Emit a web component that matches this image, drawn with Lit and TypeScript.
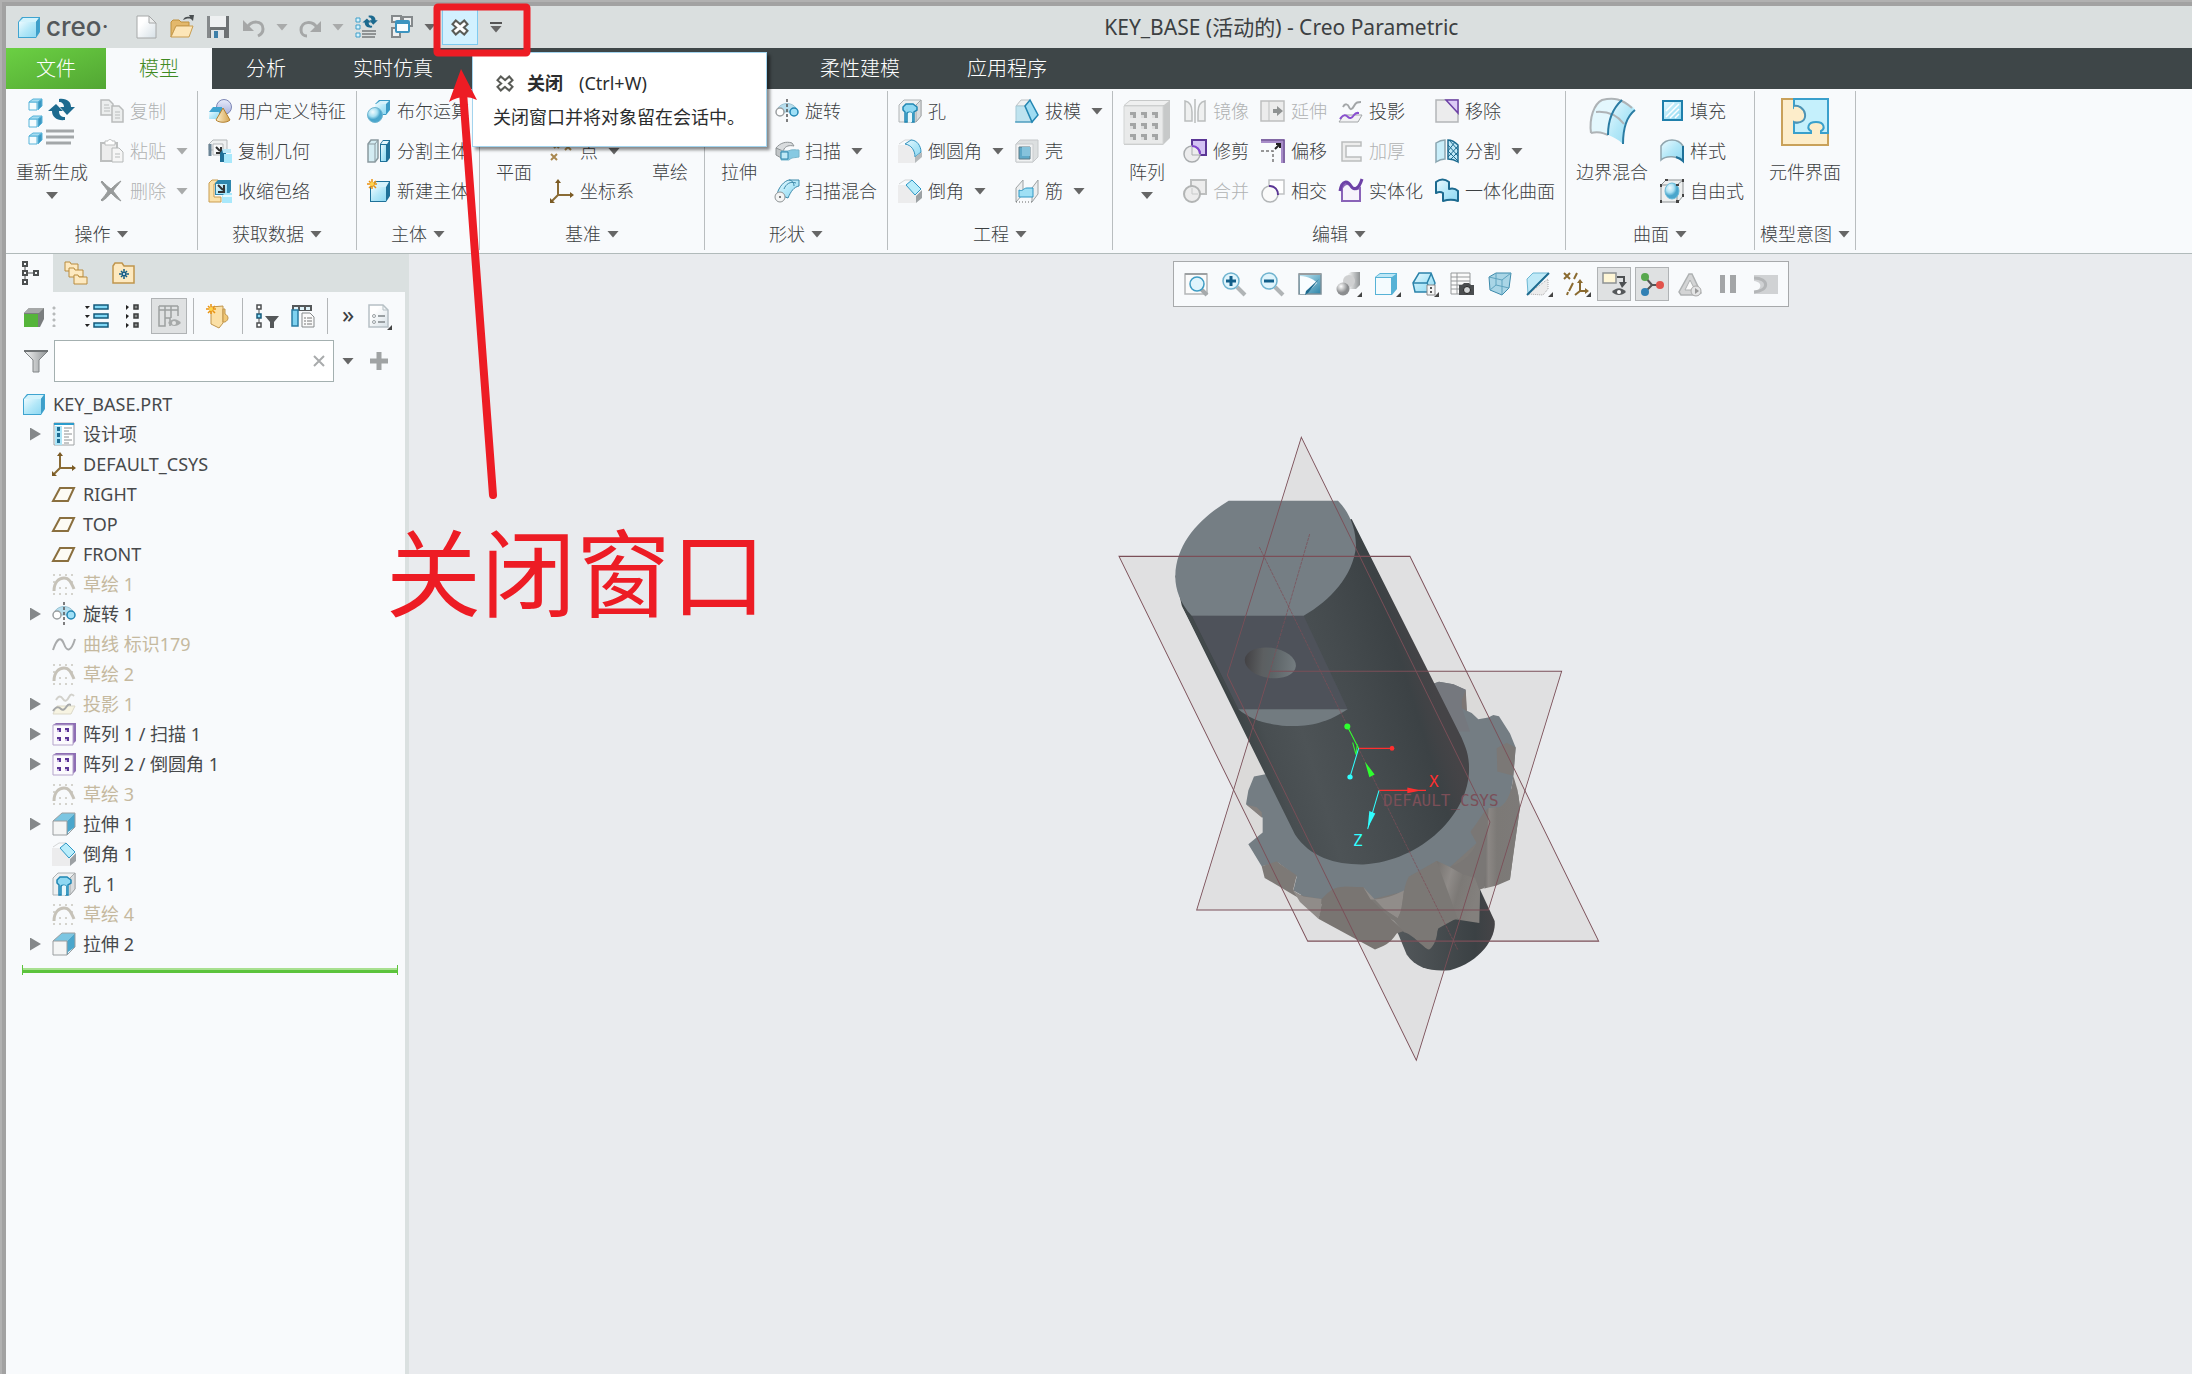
import { LitElement, html, svg, css, nothing, type SVGTemplateResult } from "lit";
import { customElement, state } from "lit/decorators.js";
import { classMap } from "lit/directives/class-map.js";

type Art = SVGTemplateResult;

interface Command {
  label: string;
  icon: string;
  menu?: boolean;
  disabled?: boolean;
}
interface BigCommand extends Command {
  big: true;
}
type Column = BigCommand | Command[];
interface Group {
  label: string;
  menu: boolean;
  columns: Column[];
}
interface TreeItem {
  label: string;
  icon: string;
  expandable?: boolean;
  hidden?: boolean;
}

const sketchArt = svg`
  <g fill="#c9c6be"><circle cx="2" cy="3" r="1"/><circle cx="8" cy="3" r="1"/><circle cx="14" cy="3" r="1"/><circle cx="20" cy="3" r="1"/>
  <circle cx="2" cy="10" r="1"/><circle cx="20" cy="10" r="1"/><circle cx="8" cy="16" r="1"/><circle cx="14" cy="16" r="1"/>
  <circle cx="2" cy="22" r="1"/><circle cx="8" cy="22" r="1"/><circle cx="14" cy="22" r="1"/><circle cx="20" cy="22" r="1"/></g>
  <path d="M2 19C2 10 7 6 12 6s7 4 10 11" fill="none" stroke="#c6c2b8" stroke-width="3"/>`;

const cycleArrows = svg`<path d="M31 1c8-1 12 3 12 8h4l-8 8-7-8h4c0-3-2-5-5-5z" fill="#1c6a8f"/><path d="M37 22c-8 1-13-3-13-9h-4l8-7 7 7h-4c0 4 2 6 6 6z" fill="#1c6a8f"/>`;

const ICONS: Record<string, Art> = {
  cube: svg`<path d="M1 7l4-5h18v15l-4 6H1z" fill="#3fa4d0"/><path d="M2 7l4-4h16l-3 4z" fill="#d3f3fc"/><path d="M19 7l3-4v14l-3 5z" fill="#3f9fc9"/><path d="M2 7h17v15H2z" fill="url(#ice)"/>`,
  newFile: svg`<path d="M3 1h12l7 7v15H3z" fill="url(#paper)" stroke="#a6a8a8"/><path d="M15 1v7h7z" fill="#eceeee" stroke="#a6a8a8"/>`,
  open: svg`<path d="M1 22V7l2-2h6l2 2h8v4H6z" fill="#e3b86b" stroke="#c0913f"/><path d="M1 22l5-11h17l-4 11z" fill="#fde6b8" stroke="#c99d50"/><path d="M13 5c1-3 4-4 7-3l-1-2 5 0-1 6-2-2c-3-1-5 0-8 1z" fill="#4a4f51"/>`,
  save: svg`<path d="M1 1h22v22H1z" fill="#6d7173"/><path d="M4 1h16v11H4z" fill="#eef0f1"/><path d="M5 15h13v8H5z" fill="#dfe3e5"/><path d="M8 16h4v7H8z" fill="#3d7fa8"/><path d="M1 1h3v22H1z" fill="#85898b"/>`,
  undo: svg`<path d="M1 5v11h11z" fill="#a5a7a7"/><path d="M5 13C9 5 21 5 21 14c0 4-3 6-5 7" fill="none" stroke="#a5a7a7" stroke-width="3"/>`,
  redo: svg`<path d="M23 6v11H12z" fill="#a5a7a7"/><path d="M19 13C15 5 3 6 3 15c0 4 3 6 6 6" fill="none" stroke="#a5a7a7" stroke-width="3"/>`,
  regenSmall: svg`<g fill="#d8f3fd" stroke="#3f9fc9"><path d="M2 3h4v4H2z"/><path d="M2 10h4v4H2z"/><path d="M2 18h4v4H2z"/></g><g stroke="#8f9394" stroke-width="2"><path d="M8 16h14M8 19h14M8 22h13"/></g><g transform="translate(-3 0) scale(.57)">${cycleArrows}</g>`,
  windows: svg`<g fill="#eef0f0" stroke="#84898b" stroke-width="2"><path d="M2 1h9v6H2zM13 2h9v9h-9zM2 13h8v9H2z"/></g><rect x="6" y="6" width="13" height="11" rx="1" fill="#f8fdff" stroke="#3b94c0" stroke-width="2"/><path d="M7 8h11" stroke="#3b94c0" stroke-width="2"/>`,
  closeX: svg`<path d="M8 9l8 7M16 9l-8 7" stroke="#5a5c57" stroke-width="7" stroke-linecap="square"/><path d="M8 9l8 7M16 9l-8 7" stroke="#fff" stroke-width="3" stroke-linecap="square"/>`,
  regenerate: svg`<g stroke="#58b4da"><g fill="#f5fcfe"><path d="M1 4h8v8H1zM1 21h8v8H1zM1 38h8v8H1z"/></g><g fill="#a6dcf0"><path d="M1 4l4-3h9l-4 3zM1 21l4-3h9l-4 3zM1 38l4-3h9l-4 3z"/></g><g fill="#3c98c2"><path d="M10 4l4-3v7l-4 4zM10 21l4-3v7l-4 4zM10 38l4-3v7l-4 4z"/></g></g><g stroke="#a3a7a9" stroke-width="3"><path d="M18 33h28M18 39h28M18 45h25"/></g>${cycleArrows}`,
  copy: svg`<g fill="#eceeee" stroke="#b9bcbc" stroke-width="1.500"><path d="M1 1h8l4 4v11H1z"/><path d="M12 7h7l4 4v12H12z"/></g><path d="M4 6h5M4 9h6M4 12h6M15 13h5M15 16h5M15 19h5" stroke="#b9bcbc"/>`,
  paste: svg`<path d="M1 4h16v18H1z" fill="#ededed" stroke="#bdbfbf" stroke-width="2"/><path d="M5 2h3c0-2 4-2 4 0h3v4H5z" fill="#fff" stroke="#bdbfbf"/><path d="M12 9h7l4 4v10H12z" fill="#f6f6f6" stroke="#b5b8b8"/><path d="M15 15h5M15 18h5" stroke="#b9bcbc"/>`,
  del: svg`<path d="M2 2c3 3 6 6 9 8 3-3 6-6 10-8-3 4-6 7-8 10 3 3 5 7 8 10-4-2-7-5-10-8-3 3-5 6-9 8l-1-1c3-3 5-6 7-9-2-3-5-6-7-9z" fill="#989b9b" stroke="#989b9b"/>`,
  udf: svg`<circle cx="16" cy="8" r="7.500" fill="url(#lav)" stroke="#7d86b5"/><path d="M1 13l4-5h9v6l-3 6H1z" fill="#3fa4d0"/><path d="M1 13h10v7H1z" fill="url(#ice)"/><path d="M15 9l7 12c-3 3-11 3-14 0z" fill="url(#gold)" stroke="#b2802f"/>`,
  copyGeom: svg`<path d="M1 5l4-4h14v10H1z" fill="#eef0f1" stroke="#b3b7b9"/><path d="M2 5v12" stroke="#6b8496" stroke-width="3"/><path d="M5 5h10v11H5z" fill="#f8f9fa" stroke="#b3b7b9"/><path d="M8 8l4 4M13 8v6H8" stroke="#333" stroke-width="2" fill="none"/><path d="M12 14l3-4h3v13h-6z" fill="#1f7199"/><path d="M14 10h9v4h-8z" fill="#bde9f8"/><path d="M16 15h8v9h-8z" fill="#a9e8fb"/>`,
  shrinkwrap: svg`<path d="M1 4l3-3h6v4H6v13h7v5H1z" fill="#fbe2ab" stroke="#c99d50"/><path d="M7 4l3-3h13v11l-3 4H7z" fill="#2f87ae"/><path d="M8 5h11v10H8z" fill="url(#ice)"/><path d="M10 6l5 5M16 6v7h-6" stroke="#333" stroke-width="2" fill="none"/><path d="M14 17l3-3h7v10H14z" fill="#a9e8fb"/><path d="M15 17h9" stroke="#e6f9fe" stroke-width="2"/>`,
  boolean: svg`<path d="M8 5l4-4h11v10l-4 5H8z" fill="#3b9cc6"/><path d="M8 5h11v10H8z" fill="url(#ice)"/><path d="M9 5l4-3h9l-3 3z" fill="#d5f2fb"/><circle cx="8" cy="16" r="7.500" fill="url(#ball)" stroke="#70b6d1"/>`,
  splitBody: svg`<path d="M1 5l3-4h7v18l-3 4H1z" fill="#d3ecf3" stroke="#8a999f" stroke-width="1.500"/><path d="M1 5h7v18M8 5l3-4" fill="none" stroke="#8a999f"/><path d="M13 5l3-4h7v18l-3 4h-7z" fill="#1f7199"/><path d="M14 6h5v16h-5z" fill="url(#ice)"/><path d="M14 5l2-3h6l-2 3z" fill="#e3f7fd"/>`,
  newBody: svg`<path d="M3 8l5-6h15v15l-4 6H3z" fill="#1f7199"/><path d="M4 8h15v14H4z" fill="url(#ice)"/><path d="M5 8l4-5h13l-3 5z" fill="#d5f2fb"/><path d="M5 0v10M0 5h10M2 2l7 7M9 2L2 9" stroke="#e99312" stroke-width="1.500"/><circle cx="5" cy="5" r="2" fill="#ffd54c"/>`,
  plane48: svg`<path d="M10 12h32L34 40H2z" fill="#faf3e2" stroke="#8a6a30" stroke-width="3"/>`,
  sketch48: svg`<path d="M4 36C6 8 30 6 42 30" fill="none" stroke="#3a97c2" stroke-width="4"/>`,
  extrude48: svg`<path d="M4 18L20 4h24L28 18v26H4z" fill="url(#ice)" stroke="#8f9496" stroke-width="2"/>`,
  axis: svg`<path d="M3 21L21 3" stroke="#8a6a30" stroke-width="2" stroke-dasharray="6 2"/>`,
  point: svg`<g stroke="#a98850" stroke-width="2"><path d="M1 15l6 6M7 15l-6 6M15 5l6 6M21 5l-6 6M4 4l5 5M9 4L4 9"/></g>`,
  csys: svg`<g stroke="#8a6b35" stroke-width="2" fill="none"><path d="M8 2v14h14M8 16l-6 6"/></g><path d="M8 0l3 4H5zM24 16l-4-3v6zM0 24v-5l5 5z" fill="#7a5a24"/>`,
  revolve: svg`<path d="M3 9C7 3 17 3 21 9v4H3z" fill="#b7dfef" stroke="#9cc3d3"/><path d="M12 0v24" stroke="#555" stroke-width="1.500" stroke-dasharray="3 2"/><circle cx="5" cy="13" r="4" fill="#fff" stroke="#9b9fa1" stroke-width="1.500"/><circle cx="19" cy="13" r="4" fill="#9fe0f7" stroke="#2286b3" stroke-width="1.500"/>`,
  sweep: svg`<path d="M1 9C5 4 11 2 17 4l2 3c-5-1-8 0-10 3l-1 4z" fill="#d9dcde" stroke="#8f9496"/><path d="M1 9l7 3v8l-7-4z" fill="#c1c5c7" stroke="#8f9496"/><path d="M6 12h7c4-2 8-1 11-1v7c-4 1-7 0-10 3H6z" fill="#86c9e2" stroke="#79b5cb"/><path d="M6 13h7v7H6z" fill="#bfe9f6" stroke="#2b83aa"/>`,
  sweptBlend: svg`<path d="M2 15C4 8 9 2 14 1h10v6c-5 1-8 5-11 12z" fill="url(#ice)" stroke="#3d8aab"/><path d="M9 10c2-5 6-8 12-6M14 1c3 0 5 3 5 6" fill="none" stroke="#3d8aab"/><circle cx="5" cy="18" r="5" fill="#f3f4f4" stroke="#8e9395"/><circle cx="5" cy="18" r="1" fill="#555"/>`,
  hole: svg`<path d="M1 6l5-5h17v16l-5 6H1z" fill="#eef0f1" stroke="#b0b4b6"/><path d="M18 6l5-5v16l-5 6z" fill="#d9dcde" stroke="#a3a7a9"/><path d="M5 11V8l3-3h7l4 3v3l-3 2v10h-2v-9c-1-1-4-1-5 0v9H7V13z" fill="#8fd8f2" stroke="#1f86b3" stroke-width="1.500"/><path d="M10 14c1-1 3-1 4 0v9h-4z" fill="#e6f8fd"/>`,
  round: svg`<path d="M0 6h7c6 1 10 6 10 12v6H0z" fill="#ececed"/><path d="M1 5l6-4h7" fill="none" stroke="#d3d5d6"/><path d="M7 5l6-4c6 0 10 6 10 12l-6 5C17 11 13 6 7 5z" fill="url(#ice)" stroke="#3393bf"/><path d="M17 18l7-5v5l-7 6z" fill="#b5b9bb"/>`,
  chamfer: svg`<path d="M0 6h8l10 10v8H0z" fill="#ececed"/><path d="M1 5l6-4h7" fill="none" stroke="#d3d5d6"/><path d="M8 6l6-5 9 9-6 6z" fill="#b9edfb" stroke="#2f97c4"/><path d="M18 17l6-6v8l-6 5z" fill="#9ca1a4"/>`,
  draft: svg`<path d="M1 7l5-6h9l-4 6z" fill="#eef1f2" stroke="#bcc0c2"/><path d="M1 7h9l7 16H1z" fill="#bfe3ef" stroke="#a5c9d6"/><path d="M10 7l5-6 8 15-6 7z" fill="#9fdcf2" stroke="#2386b2" stroke-width="1.500"/><path d="M0 23h18" stroke="#2386b2"/>`,
  shell: svg`<path d="M1 5l4-4h18v17l-5 5H1z" fill="#dcdfe0" stroke="#c5c8ca"/><path d="M1 5h17v18H1z" fill="#f0f1f2" stroke="#c9ccce"/><path d="M4 8h11v12H4z" fill="#5fa9c8" stroke="#5f7c88"/><path d="M7 8h8v9H7z" fill="#86c3dc"/>`,
  rib: svg`<path d="M1 9l7-8v14l-7 8zM17 9l6-8v14l-6 8z" fill="#eceeef" stroke="#9da2a4"/><path d="M4 11c4 2 4-2 8-2h6v9H4z" fill="#9fe0f5" stroke="#2f97c4"/><path d="M1 23h16" stroke="#666" stroke-dasharray="1 2"/>`,
  pattern48: svg`<path d="M1 7l6-5h40v38l-7 7H1z" fill="#c7c9c9"/><path d="M2 7l5-4h39l-5 4z" fill="#eff0f0"/><path d="M1 8h39v38H1z" fill="#e9eaea" stroke="#d2d4d4"/><g fill="#a3a5a5"><path d="M7 14h6v6H7zM18 14h6v6h-6zM29 14h6v6h-6zM7 25h6v6H7zM18 25h6v6h-6zM29 25h6v6h-6zM7 36h6v6H7zM18 36h6v6h-6zM29 36h6v6h-6z"/></g><g fill="#dcdddd"><path d="M7 17h3v3H7zM18 17h3v3h-3zM29 17h3v3h-3zM7 28h3v3H7zM18 28h3v3h-3zM29 28h3v3h-3zM7 39h3v3H7zM18 39h3v3h-3zM29 39h3v3h-3z"/></g>`,
  mirror: svg`<g fill="#eff0f0" stroke="#babdbd" stroke-width="1.500"><path d="M2 2c5 1 7 5 7 11v9H2zM22 2c-5 1-7 5-7 11v9h7z"/><path d="M12 0v24"/></g>`,
  extend: svg`<path d="M0 2h23v20H0z" fill="#ececec" stroke="#bdbfbf" stroke-width="1.500"/><path d="M8 2v20" stroke="#bdbfbf"/><path d="M12 10h4V7l6 5-6 5v-3h-4z" fill="#8f9292"/>`,
  project: svg`<path d="M4 8c2-4 5-3 6 0s3 3 5-1 4-4 7-4" fill="none" stroke="#a3a6a8" stroke-width="2"/><path d="M5 16h18l-4 7H0z" fill="#f2f2f4" stroke="#a3a6a8"/><path d="M1 20c3-5 6-4 8-2s4 1 6-2 4-2 5-2" fill="none" stroke="#8a4fd0" stroke-width="2"/>`,
  removeFace: svg`<path d="M1 1h22v22H1z" fill="#ececed" stroke="#b3b5b8" stroke-width="1.500"/><path d="M11 1h12v13z" fill="#dccbf5" stroke="#6d41a6" stroke-width="1.500"/>`,
  trim: svg`<path d="M9 1h14v15h-6c0-5-3-8-8-8z" fill="#d3c2f3" stroke="#5b3596" stroke-width="2"/><circle cx="9" cy="15" r="8" fill="#ececed" stroke="#a9acae" stroke-width="1.500"/><path d="M9 7c5 0 8 4 8 8" fill="none" stroke="#8142cf" stroke-width="2"/><path d="M9 8v8h7" fill="none" stroke="#a9acae"/>`,
  offset: svg`<path d="M0 2h22v22" fill="none" stroke="#a88dc9" stroke-width="4"/><path d="M0 1h23v23" fill="none" stroke="#5d4280"/><path d="M0 12h12v12" fill="none" stroke="#777" stroke-dasharray="3 2" stroke-width="1.500"/><path d="M14 10l5-5M15 5h4v4" fill="none" stroke="#222" stroke-width="2"/>`,
  thicken: svg`<path d="M22 3H3v19h19v-4H7V7h15z" fill="#ededed" stroke="#babdbd" stroke-width="1.500"/>`,
  splitFace: svg`<path d="M1 4c3-2 6-3 9-3v19c-3 0-6 1-9 3z" fill="#c9eefa" stroke="#8aa5b0" stroke-width="1.500"/><path d="M13 1c4 0 7 2 10 5v17c-3-2-6-3-10-3z" fill="#bfe8f7" stroke="#1c6a8f" stroke-width="1.500"/><path d="M13 6l10 11M13 12l10 10M14 1l9 10M23 7L13 18M23 13l-8 8M20 3l-7 9" stroke="#1c6a8f"/>`,
  merge: svg`<path d="M8 1h15v14H8z" fill="#ededed" stroke="#bdbfbf" stroke-width="2"/><circle cx="9" cy="15" r="8" fill="#ececec" stroke="#b2b4b4" stroke-width="2"/><path d="M9 9v6h6" fill="none" stroke="#c8caca"/>`,
  intersect: svg`<path d="M8 1h15v14H8z" fill="#fff" stroke="#c0c2c4" stroke-width="1.500"/><circle cx="9" cy="15" r="8" fill="#fafafa" stroke="#b2b5b7" stroke-width="1.500"/><path d="M8 7c6 0 9 4 9 9" fill="none" stroke="#5b3596" stroke-width="2"/>`,
  solidify: svg`<path d="M3 9v13h18V9c-5 3-8 0-10-3-3-2-6-1-8 3z" fill="#f6f3fb" stroke="#8a63b8" stroke-width="2"/><path d="M1 12C3 0 9 2 12 7s8 3 11-7" fill="none" stroke="#6d41a6" stroke-width="3"/>`,
  unified: svg`<path d="M1 14V3c4-3 9-3 13 0v7c4-1 7 0 9 2v10c-5-2-9-2-15 0V14c-3-2-5-1-7 0z" fill="url(#ice)" stroke="#1c6a8f" stroke-width="2" stroke-linejoin="round"/>`,
  boundary48: svg`<path d="M3 35C1 20 6 6 14 2c12-3 22-1 33 8-9 9-12 22-12 36-8-8-18-13-32-11z" fill="#e3f7fd"/><path d="M20 37c5 2 10 4 15 9 0-14 3-27 12-34-3-4-8-7-13-10-10 9-14 22-14 35z" fill="url(#ice)"/><path d="M3 35C1 20 6 6 14 2c12-3 20-1 30 8" fill="none" stroke="#aeb3b6" stroke-width="2"/><path d="M8 14c12-1 21 3 28 12M3 35c7-2 12 0 17 2" fill="none" stroke="#aeb3b6" stroke-width="2"/><path d="M34 2C24 11 20 24 20 37M35 46c0-14 3-27 12-34" fill="none" stroke="#2a7ca3" stroke-width="2"/>`,
  fill: svg`<path d="M3 2h19v19H3z" fill="url(#ice)" stroke="#1f7fab" stroke-width="2"/><path d="M6 12l8-8M6 18L19 5M10 19l9-9M15 19l4-4" stroke="#fff" stroke-width="1.500"/>`,
  style: svg`<path d="M1 21V7C6-1 18-1 23 7v15c-5-5-17-6-22-1z" fill="url(#ice)" stroke="#8fa5ae" stroke-width="1.500"/><path d="M23 7v15c-2-2-4-3-7-4" fill="none" stroke="#1f7199" stroke-width="2"/>`,
  freestyle: svg`<path d="M1 6l5-5h17v16l-5 6H1z" fill="#eef0f0" stroke="#8e9294"/><path d="M1 6h16v17M17 6l6-5" fill="none" stroke="#8e9294"/><ellipse cx="12" cy="12" rx="7" ry="8" fill="url(#ball)" stroke="#6bbbd9"/><path d="M0 5h2v3H0zM16 5h3v2h-3zM22 0h2v3h-2zM5 0h3v2H5zM0 21h2v3H0zM16 21h3v3h-3zM22 15h2v3h-2z" fill="#444"/>`,
  component48: svg`<path d="M1 1h46v46H1z" fill="#fdedca" stroke="#c9a15a" stroke-width="2"/><path d="M13 1h34v34h-7v-2c4-2 4-9-5-9s-9 7-5 9v2H13V24c2 1 4 1 6-1 5-4 4-12-1-14-2-1-4-1-5 0z" fill="#c5f0fc" stroke="#3aa0cc" stroke-width="2"/><path d="M13 8c4-1 10 2 11 8s-4 10-11 8" fill="#fdedca" stroke="#4d93b5" stroke-width="2"/>`,
  treeTab: svg`<g fill="none" stroke="#4c4f50" stroke-width="2"><path d="M5 1h4v4H5zM5 10h4v4H5zM16 10h4v4h-4zM5 19h4v4H5z"/></g><path d="M7 6v3M7 15v3M10 12h5" stroke="#4c4f50"/>`,
  folders: svg`<g fill="#fde9c0" stroke="#b98c3f"><path d="M0 1h5l1 2h7v7H0z"/><path d="M4 7h5l1 2h8v7H4z"/><path d="M9 14h4l1 2h8v7H9z"/></g>`,
  favorites: svg`<path d="M1 5l2-3h7l2 3h10v17H1z" fill="#fde9c0" stroke="#c0954c" stroke-width="1.500"/><path d="M12 8v10M7 13h10M9 10l6 6M15 10l-6 6" stroke="#175d85" stroke-width="1.500"/><circle cx="12" cy="13" r="1" fill="#fff"/>`,
  greenCube: svg`<path d="M2 9l5-5h15v11l-4 8H2z" fill="#7a7d7e"/><path d="M2 10h14v13H2z" fill="#55b43a"/><path d="M2 9l5-5h15l-5 5z" fill="#a6a8a8"/>`,
  expandAll: svg`<path d="M0 2h5L2 5zM0 11h5l-3 3zM0 20h5l-3 3z" fill="#222"/><g fill="#7fd7f5" stroke="#14597a" stroke-width="1.500"><path d="M9 1h14v4H9zM9 10h14v4H9zM9 19h14v4H9z"/></g>`,
  collapseAll: svg`<path d="M5 1v5l3-3zM5 10v5l3-3zM5 19v5l3-3z" fill="#222"/><g fill="#888b8b" stroke="#3a3c3c" stroke-width="1.500"><path d="M13 1h4v4h-4zM13 10h4v4h-4zM13 19h4v4h-4z"/></g>`,
  columns: svg`<path d="M2 2h19M2 6h19M2 2v20h6V2M8 14h5v8M14 2v12M21 2v10" fill="none" stroke="#9da0a0" stroke-width="1.500"/><path d="M11 19c4-5 9-5 13 0-4 4-9 4-13 0z" fill="#a6a9a9"/><circle cx="17" cy="19" r="2" fill="#e3e4e4"/>`,
  addFolder: svg`<path d="M5 3l12-1v17l-4 5-8-4z" fill="#fbe0a6" stroke="#c0954c"/><path d="M17 5h2v5c4 2 4 6 0 8h-2z" fill="#f0c878" stroke="#c0954c"/><path d="M5 0v10M0 5h10M2 2l7 7M9 2L2 9" stroke="#e99312" stroke-width="1.500"/><circle cx="5" cy="5" r="2" fill="#ffd54c"/>`,
  treeFilter: svg`<g fill="#fff" stroke="#4c4f50" stroke-width="1.500"><path d="M2 1h4v4H2zM2 19h4v4H2z"/></g><path d="M2 10h4v4H2z" fill="#8edbf6" stroke="#14597a" stroke-width="1.500"/><path d="M4 5v5M4 14v5" stroke="#4c4f50"/><path d="M10 12h14l-5 6v6h-4v-6z" fill="#55585a"/>`,
  treePrefs: svg`<path d="M1 1h20v6H1z" fill="#55585a"/><path d="M3 3h4v3H3zM9 3h4v3H9zM15 3h4v3h-4z" fill="#dff3fa"/><path d="M1 6h6v16H1z" fill="#7fd2f0" stroke="#2a7ca3" stroke-width="1.500"/><path d="M11 9h8l4 4v10H11z" fill="#fafafa" stroke="#85898b"/><path d="M13 14h2M16 14h5M13 17h2M16 17h5M13 20h2M16 20h5" stroke="#777"/>`,
  pagePrefs: svg`<path d="M1 1h14l5 5v17H1z" fill="url(#paper)" stroke="#b6c0c5" stroke-width="1.500"/><path d="M15 1v5h5" fill="none" stroke="#b6c0c5"/><g fill="none" stroke="#9aa0a3"><circle cx="6" cy="12" r="1.500"/><circle cx="6" cy="18" r="1.500"/><path d="M10 12h7M10 18h7" stroke-width="2"/></g><path d="M24 21v5h-5z" fill="#444"/>`,
  funnel: svg`<path d="M0 2h24l-9 9v12H9V11z" fill="url(#steel)" stroke="#808486"/><path d="M0 2h24" stroke="#6f7375" stroke-width="2"/>`,
  designItems: svg`<path d="M2 1h20v22H2z" fill="#fff" stroke="#9ea2a4"/><path d="M2 2h20" stroke="#2a9ccc" stroke-width="2"/><path d="M3 4h7v19H3z" fill="#aee6f8"/><g fill="#1d6d93"><path d="M5 5h3v4H5zM5 11h3v4H5zM5 17h3v4H5z"/></g><path d="M12 6h8M12 9h5M12 12h8M12 15h5M12 18h8M12 21h5" stroke="#8c9092"/>`,
  datum: svg`<path d="M8 6h14l-6 13H1z" fill="#fdfbf4" stroke="#8a6f3f" stroke-width="2"/>`,
  sketch: sketchArt,
  curve: svg`<path d="M1 18C5 6 9 4 12 12s7 8 11-5" fill="none" stroke="#a9abac" stroke-width="2"/>`,
  projectHidden: svg`<path d="M4 8c3-5 5-4 7-1s4 2 6-2 4-2 5-1" fill="none" stroke="#d2d1cb" stroke-width="2"/><path d="M5 14h18l-4 8H1z" fill="#f7f4e2" stroke="#dcd9c8"/><path d="M1 19c3-5 6-4 8-2s4 0 6-3 3-1 4-1" fill="none" stroke="#a5a7a8" stroke-width="2"/>`,
  pattern: svg`<path d="M1 3l3-2h20v18l-4 4H1z" fill="#8e6fb4"/><path d="M1 3h20v20H1z" fill="#fbfafd" stroke="#b5a5cb"/><g fill="#5b3596"><path d="M5 6h4v4H5zM13 6h4v4h-4zM5 15h4v4H5zM13 15h4v4h-4z"/></g><g fill="#cbb9e4"><path d="M5 8h2v2H5zM13 8h2v2h-2zM5 17h2v2H5zM13 17h2v2h-2z"/></g>`,
  extrude: svg`<path d="M1 9l9-8h13l-8 8z" fill="#7cc6e2"/><path d="M15 9l8-8v14l-8 8z" fill="#4aa6cc"/><path d="M16 20l7-5-7 8z" fill="#e8f6fb"/><path d="M1 9h14v14H1z" fill="#f4f5f5"/><path d="M1 9l9-8h13v14l-8 8H1zM1 9h14v14" fill="none" stroke="#9a9ea0"/>`,
  zoomFit: svg`<path d="M1 2h22v20H1z" fill="#fbfbfb" stroke="#b4b7b8" stroke-width="1.500"/><path d="M1 2h22" stroke="#9da1a3" stroke-width="2"/><path d="M16 16l7 7" stroke="#a6aaac" stroke-width="4"/><circle cx="13" cy="12" r="7" fill="#dff4fc" stroke="#3e9cc4" stroke-width="1.500"/>`,
  zoomIn: svg`<path d="M15 15l8 8" stroke="#b0b4b6" stroke-width="4"/><circle cx="9" cy="9" r="8" fill="#dff4fc" stroke="#6fb3cf" stroke-width="1.500"/><path d="M4 9h10M9 4v10" stroke="#125f8a" stroke-width="3"/>`,
  zoomOut: svg`<path d="M15 15l8 8" stroke="#b0b4b6" stroke-width="4"/><circle cx="9" cy="9" r="8" fill="#dff4fc" stroke="#6fb3cf" stroke-width="1.500"/><path d="M4 9h10" stroke="#125f8a" stroke-width="3"/>`,
  repaint: svg`<path d="M1 2h22v20H1z" fill="url(#teal)" stroke="#7e9099" stroke-width="1.500"/><path d="M2 4c8 0 15 4 17 7L8 22H2z" fill="#f9fdff"/><path d="M21 7L10 21l-3 2 1-4z" fill="#1c6a8f"/><path d="M1 2h22" stroke="#999da0" stroke-width="2"/>`,
  shading: svg`<path d="M12 2l3-2h9v13l-4 4h-8z" fill="url(#steel)"/><circle cx="13" cy="9" r="6" fill="#cfd0d1"/><circle cx="7" cy="17" r="6.500" fill="url(#grayBall)"/><path d="M26 20v5h-5z" fill="#444"/>`,
  savedView: svg`<path d="M1 5l5-4h17v16l-5 6H1z" fill="#56b2d6"/><path d="M2 6h15v16H2z" fill="#f4fbfe"/><path d="M2 5l4-3h16l-4 3z" fill="#bde7f6"/><path d="M27 20v5h-5z" fill="#444"/>`,
  viewManager: svg`<path d="M7 1h12l4 10-3 9H3l-2-9z" fill="url(#ice)" stroke="#2b83aa" stroke-width="1.500"/><path d="M1 11h14l4-9M15 11l4 8" fill="none" stroke="#2b83aa" stroke-width="1.500"/><path d="M15 13h8v10h-8z" fill="#f5f5f5" stroke="#888"/><path d="M18 16h2M18 20h2" stroke="#555" stroke-width="2"/><path d="M27 20v5h-5z" fill="#444"/>`,
  appearance: svg`<path d="M1 1h19v21H1z" fill="#fafafa" stroke="#96999b"/><path d="M1 5h19M1 9h19M1 13h19M1 17h19M7 1v21" stroke="#96999b"/><path d="M9 13h3l2-2h5l2 2h3v10H9z" fill="#4a4d4f"/><circle cx="17" cy="18" r="3.500" fill="#d2d5d6" stroke="#222"/>`,
  perspective: svg`<path d="M1 5l7-4h15l-2 15-7 7-12-5z" fill="#a9d5e6" stroke="#3d8aab"/><path d="M1 5l13 3 9-7M14 8v15M8 1v12l13 3M8 13l-6 5" fill="none" stroke="#5fa3bf"/>`,
  section: svg`<path d="M1 7l6-6h15L2 22z" fill="#bfe9f7" stroke="#6db7d3"/><path d="M2 22L22 7v10l-5 6z" fill="#ececec" stroke="#aaa" stroke-dasharray="1 1"/><path d="M1 23L23 1" stroke="#1c6a8f" stroke-width="2"/><path d="M27 20v5h-5z" fill="#444"/>`,
  datumDisplay: svg`<g stroke="#8a6a30" stroke-width="2" fill="none"><path d="M0 1l6 6M6 1L0 7M13 1l-3 6M9 11l-4 8M4 20l-1 3M16 10v9h7M16 19l-5 4"/></g><path d="M16 7l3 4h-6zM25 19l-4-3v6z" fill="#8a6a30"/><path d="M27 20v5h-5z" fill="#444"/>`,
  annotation: svg`<path d="M1 1h13v10H1z" fill="#fef6d6" stroke="#8e9294" stroke-width="1.500"/><path d="M15 5h7v6" fill="none" stroke="#4d5052" stroke-width="2"/><path d="M17 10h8l-5 6z" fill="#4d5052"/><path d="M10 20c4-5 10-5 14 0-4 4-10 4-14 0z" fill="#55585a"/><circle cx="17" cy="20" r="2" fill="#fff"/>`,
  spinCenter: svg`<path d="M12 13L5 5M12 13h9M12 13l-7 7" stroke="#555" stroke-width="2"/><circle cx="5" cy="5" r="4" fill="#58a84e"/><circle cx="20" cy="13" r="4" fill="#e2534c"/><circle cx="5" cy="20" r="4" fill="#3180b4"/>`,
  triangle: svg`<path d="M11 2h3l9 19-3 2H3l-2-3z" fill="#d3d4d5" stroke="#aeb1b2" stroke-width="1.500"/><path d="M12 8l5 10H7z" fill="#fafafa" stroke="#aeb1b2"/><circle cx="18" cy="19" r="5" fill="#e3e4e5" stroke="#aaa"/><path d="M17 16v6l4-3z" fill="#999"/>`,
  pause: svg`<path d="M4 3h5v18H4zM14 3h6v18h-6z" fill="#a3a5a7"/>`,
  resume: svg`<path d="M0 3h24v19H0v-3c8-1 9-9 0-10z" fill="#d0d2d4"/><path d="M0 6c15 0 16 13 0 14" fill="none" stroke="#b4b6b8" stroke-width="3"/>`,
};

const GROUPS: Group[] = [
  { label: "操作", menu: true, columns: [
    { big: true, label: "重新生成", icon: "regenerate", menu: true },
    [{ label: "复制", icon: "copy", disabled: true }, { label: "粘贴", icon: "paste", disabled: true, menu: true }, { label: "删除", icon: "del", disabled: true, menu: true }],
  ] },
  { label: "获取数据", menu: true, columns: [
    [{ label: "用户定义特征", icon: "udf" }, { label: "复制几何", icon: "copyGeom" }, { label: "收缩包络", icon: "shrinkwrap" }],
  ] },
  { label: "主体", menu: true, columns: [
    [{ label: "布尔运算", icon: "boolean" }, { label: "分割主体", icon: "splitBody" }, { label: "新建主体", icon: "newBody" }],
  ] },
  { label: "基准", menu: true, columns: [
    { big: true, label: "平面", icon: "plane48" },
    [{ label: "", icon: "axis" }, { label: "点", icon: "point", menu: true }, { label: "坐标系", icon: "csys" }],
    { big: true, label: "草绘", icon: "sketch48" },
  ] },
  { label: "形状", menu: true, columns: [
    { big: true, label: "拉伸", icon: "extrude48" },
    [{ label: "旋转", icon: "revolve" }, { label: "扫描", icon: "sweep", menu: true }, { label: "扫描混合", icon: "sweptBlend" }],
  ] },
  { label: "工程", menu: true, columns: [
    [{ label: "孔", icon: "hole" }, { label: "倒圆角", icon: "round", menu: true }, { label: "倒角", icon: "chamfer", menu: true }],
    [{ label: "拔模", icon: "draft", menu: true }, { label: "壳", icon: "shell" }, { label: "筋", icon: "rib", menu: true }],
  ] },
  { label: "编辑", menu: true, columns: [
    { big: true, label: "阵列", icon: "pattern48", menu: true },
    [{ label: "镜像", icon: "mirror", disabled: true }, { label: "修剪", icon: "trim" }, { label: "合并", icon: "merge", disabled: true }],
    [{ label: "延伸", icon: "extend", disabled: true }, { label: "偏移", icon: "offset" }, { label: "相交", icon: "intersect" }],
    [{ label: "投影", icon: "project" }, { label: "加厚", icon: "thicken", disabled: true }, { label: "实体化", icon: "solidify" }],
    [{ label: "移除", icon: "removeFace" }, { label: "分割", icon: "splitFace", menu: true }, { label: "一体化曲面", icon: "unified" }],
  ] },
  { label: "曲面", menu: true, columns: [
    { big: true, label: "边界混合", icon: "boundary48" },
    [{ label: "填充", icon: "fill" }, { label: "样式", icon: "style" }, { label: "自由式", icon: "freestyle" }],
  ] },
  { label: "模型意图", menu: true, columns: [
    { big: true, label: "元件界面", icon: "component48" },
  ] },
];

const MAIN_TABS = ["模型", "分析", "实时仿真"];
const EXTRA_TABS = ["柔性建模", "应用程序"];

const TREE: TreeItem[] = [
  { label: "设计项", icon: "designItems", expandable: true },
  { label: "DEFAULT_CSYS", icon: "csys" },
  { label: "RIGHT", icon: "datum" },
  { label: "TOP", icon: "datum" },
  { label: "FRONT", icon: "datum" },
  { label: "草绘 1", icon: "sketch", hidden: true },
  { label: "旋转 1", icon: "revolve", expandable: true },
  { label: "曲线 标识179", icon: "curve", hidden: true },
  { label: "草绘 2", icon: "sketch", hidden: true },
  { label: "投影 1", icon: "projectHidden", hidden: true, expandable: true },
  { label: "阵列 1 / 扫描 1", icon: "pattern", expandable: true },
  { label: "阵列 2 / 倒圆角 1", icon: "pattern", expandable: true },
  { label: "草绘 3", icon: "sketch", hidden: true },
  { label: "拉伸 1", icon: "extrude", expandable: true },
  { label: "倒角 1", icon: "chamfer" },
  { label: "孔 1", icon: "hole" },
  { label: "草绘 4", icon: "sketch", hidden: true },
  { label: "拉伸 2", icon: "extrude", expandable: true },
];

const VIEW_TOOLS: [string, string][] = [
  ["zoomFit", "重新调整"], ["zoomIn", "放大"], ["zoomOut", "缩小"], ["repaint", "重画"],
  ["shading", "渲染选项"], ["savedView", "已保存方向"], ["viewManager", "显示样式"], ["appearance", "视图管理器"],
  ["perspective", "透视图"], ["section", "截面"], ["datumDisplay", "基准显示过滤器"], ["annotation", "注释显示"],
  ["spinCenter", "旋转中心"], ["triangle", "仿真"], ["pause", "暂停"], ["resume", "继续"],
];
const PRESSED_TOOLS = new Set(["annotation", "spinCenter"]);
const OFF_TOOLS = new Set(["triangle", "pause", "resume"]);

const icon = (name: string, size = 24) => html`
  <svg class="icon" width=${size} height=${size} viewBox="0 0 ${size} ${size}" aria-hidden="true">${ICONS[name]}</svg>`;

const caret = html`<span class="caret" aria-hidden="true"></span>`;

@customElement("app-root")
export class AppRoot extends LitElement {
  @state() private activeTab = "模型";
  @state() private filter = "";

  static styles = css`
    :host {
      position: relative;
      box-sizing: border-box;
      min-height: 100vh;
      padding: 4px 0 0 4px;
      border: solid #b1b1b1;
      border-width: 2px 0 0 2px;
      background: #a2a2a2;
      color: #3c4042;
      font: 18px/24px "Noto Sans", "Noto Sans CJK SC", sans-serif;
      overflow: hidden;
      display: flex;
      flex-direction: column;
    }
    * { box-sizing: border-box; }
    button {
      font: inherit;
      color: inherit;
      background: none;
      border: 0;
      padding: 0;
      margin: 0;
      white-space: nowrap;
    }
    .icon { display: block; flex: none; overflow: visible; }
    .defs { position: absolute; width: 0; height: 0; }
    .caret {
      flex: none;
      width: 12px;
      height: 7px;
      background: #666;
      clip-path: polygon(0 0, 100% 0, 50% 100%);
    }

    /* title bar */
    .titlebar {
      display: flex;
      align-items: center;
      height: 42px;
      flex: none;
      background: #dadfdf;
    }
    .brand {
      display: flex;
      align-items: center;
      gap: 5px;
      width: 122px;
      padding-left: 11px;
      font: 500 26px/30px "Inter", sans-serif;
      color: #54585a;
    }
    .brand sup { font-size: 10px; line-height: 10px; align-self: flex-start; margin-left: -4px; padding-top: 8px; }
    .quick { display: flex; align-items: center; }
    .quick button {
      width: 36px;
      height: 36px;
      display: grid;
      place-items: center;
    }
    .quick button.drop { width: 20px; }
    .quick button.off .caret { background: #a9abab; }
    .quick button.hot {
      background: #d2f1ff;
      border: 1px solid #7ecbf1;
      margin-left: 2px;
    }
    .customize span.bars {
      display: grid;
      gap: 2px;
      justify-items: center;
    }
    .customize span.bars::before {
      content: "";
      width: 12px;
      height: 2px;
      background: #555;
    }
    .title {
      margin: 0 0 0 27%;
      font-size: 21px;
      font-weight: 400;
      line-height: 28px;
      white-space: nowrap;
    }

    /* ribbon */
    .tabs {
      display: flex;
      gap: 1px;
      height: 41px;
      flex: none;
      background: #3e4648;
      font-weight: 300;
    }
    .tabs button {
      padding: 0 33px;
      font-size: 20px;
      color: #fff;
    }
    .tabs button.file {
      width: 100px;
      padding: 0;
      margin-right: -1px;
      background: linear-gradient(160deg, #6bd043, #52a633);
    }
    .tabs button.active {
      background: #f8fafc;
      color: #3f8a22;
    }
    .extra-tabs {
      display: flex;
      gap: 1px;
      padding-left: 320px;
    }
    .ribbon {
      display: flex;
      height: 165px;
      flex: none;
      padding: 2px 0 3px;
      background: #f8fafc;
      border-bottom: 1px solid #b1baba;
      font-weight: 300;
    }
    .group {
      display: flex;
      flex-direction: column;
      justify-content: space-between;
      border-right: 1px solid #b9bdbf;
    }
    .group-body {
      display: flex;
      justify-content: center;
      gap: 12px;
      padding: 0 10px;
    }
    .stack {
      display: grid;
      grid-auto-rows: 40px;
      align-items: center;
      justify-items: start;
    }
    .cmd {
      display: flex;
      align-items: center;
      gap: 6px;
    }
    .cmd .caret { margin: 0 -1px 0 4px; }
    button:disabled { color: #b0b2b3; }
    button:disabled .caret { background: #a9abab; }
    .big {
      display: flex;
      flex-direction: column;
      align-items: center;
      align-self: start;
      min-width: 48px;
      padding-top: 7px;
    }
    .big .text { padding: 14px 0 8px; }
    .group-label {
      display: flex;
      align-items: center;
      justify-content: center;
      gap: 6px;
      height: 32px;
      padding: 0 5px;
    }

    /* body */
    .workspace {
      flex: 1;
      display: grid;
      grid-template-columns: 403px minmax(0, 1fr);
      min-height: 0;
    }
    .side {
      background: #f8fafc;
      border-right: 4px solid #dae0e0;
    }
    .side-tabs {
      display: flex;
      height: 38px;
      margin-right: -4px;
      background: #dae0e0;
    }
    .side-tabs button {
      width: 47px;
      display: grid;
      place-items: center;
    }
    .side-tabs button.active { background: #f8fafc; }
    .tree-tools {
      display: flex;
      align-items: center;
      height: 48px;
      padding-left: 16px;
    }
    .tree-tools button {
      width: 36px;
      height: 36px;
      display: grid;
      place-items: center;
    }
    .tree-tools button.pressed, .view-tools button.pressed {
      background: #dfe1e2;
      border: 1px solid #b0b3b5;
    }
    .grip {
      width: 4px;
      height: 22px;
      margin: 0 23px 0 6px;
      background: radial-gradient(circle, #b6b9ba 1px, transparent 2px) 0 0 / 4px 6px;
    }
    .tree-tools .main { width: 24px; }
    .rule {
      width: 1px;
      height: 36px;
      margin: 0 6px;
      background: #b3b6b8;
    }
    .tree-tools .more { width: 28px; font-size: 24px; padding-bottom: 4px; }
    .search {
      display: flex;
      align-items: center;
      gap: 6px;
      padding: 0 0 0 18px;
    }
    .field {
      display: flex;
      align-items: center;
      width: 280px;
      height: 42px;
      background: #fff;
      border: 1px solid #a4b0b0;
    }
    .field input {
      flex: 1;
      min-width: 0;
      height: 100%;
      border: 0;
      padding: 0 8px;
      background: none;
      font: inherit;
      outline: none;
    }
    .field button { width: 28px; height: 100%; display: grid; place-items: center; }
    .search .drop { width: 16px; display: grid; place-items: center; }
    .search .add { width: 34px; display: grid; place-items: center; }
    .tree {
      list-style: none;
      margin: 7px 0 0;
      padding: 0 7px 0 16px;
      color: #47494b;
    }
    .row {
      display: flex;
      align-items: center;
      gap: 7px;
      height: 30px;
    }
    .row.child { padding-left: 8px; }
    .row.hidden { color: #c5b99f; }
    .twist { width: 15px; height: 20px; display: grid; place-items: center start; }
    .twist::before {
      content: "";
      width: 11px;
      height: 13px;
      background: #85888a;
      clip-path: polygon(0 0, 100% 50%, 0 100%);
    }
    .twist.leaf { visibility: hidden; }
    .insert-line {
      height: 10px;
      margin: 6px 7px 0 16px;
      border: solid #5cc33c;
      border-width: 0 1px;
      background: linear-gradient(#a8e090, #a8e090) 0 3px / 100% 2px no-repeat,
        linear-gradient(#5cc33c, #5cc33c) 0 5px / 100% 3px no-repeat;
    }

    .canvas {
      position: relative;
      background: #e9ebee;
      padding-top: 7px;
    }
    .view-tools {
      display: inline-flex;
      align-items: center;
      height: 46px;
      margin-left: 764px;
      padding: 0 3px;
      background: #f8fafc;
      border: 1px solid #a7a9ab;
    }
    .view-tools button {
      width: 34px;
      height: 34px;
      margin: 0 2px;
      display: grid;
      place-items: center;
    }
    .view-tools button.pressed .icon, .tree-tools button.pressed .icon { margin: -1px; }
    .model {
      position: absolute;
      left: 691px;
      top: 166px;
    }
    .model text {
      font-family: "DejaVu Sans Mono", monospace;
      font-size: 16px;
      font-weight: 400;
    }

    /* overlays */
    .tooltip {
      position: absolute;
      left: 470px;
      top: 50px;
      width: 295px;
      height: 95px;
      padding: 18px 20px 0;
      background: #fff;
      border: 1px solid #a3d4ee;
      box-shadow: 3px 3px 3px rgb(0 0 0 / 45%);
      color: #2b2d2e;
    }
    .tooltip p { margin: 0; white-space: nowrap; }
    .tooltip .head {
      display: flex;
      align-items: center;
      gap: 10px;
      margin-bottom: 10px;
    }
    .tooltip .head .keys { margin-left: 6px; }
    .markup {
      position: absolute;
      left: -2px;
      top: -2px;
      pointer-events: none;
    }
    .callout {
      position: absolute;
      left: 384px;
      top: 511px;
      margin: 0;
      color: #ed1c24;
      font-size: 95px;
      line-height: 120px;
      white-space: nowrap;
      pointer-events: none;
    }
  `;

  private defs() {
    return html`<svg class="defs" aria-hidden="true"><defs>
      <linearGradient id="ice" x2="1" y2="1"><stop offset="0" stop-color="#ecfaff"/><stop offset=".5" stop-color="#b4e8f8"/><stop offset="1" stop-color="#8fd8f2"/></linearGradient>
      <linearGradient id="paper" x2="1" y2="1"><stop offset=".3" stop-color="#fff"/><stop offset="1" stop-color="#d6e0e6"/></linearGradient>
      <linearGradient id="lav" x2="0" y2="1"><stop offset="0" stop-color="#e9ecfb"/><stop offset="1" stop-color="#a7b0dc"/></linearGradient>
      <linearGradient id="gold"><stop offset="0" stop-color="#fdf0cf"/><stop offset="1" stop-color="#d5a450"/></linearGradient>
      <linearGradient id="steel"><stop offset="0" stop-color="#f5f6f6"/><stop offset="1" stop-color="#8e9294"/></linearGradient>
      <linearGradient id="teal" x2="1" y2="1"><stop offset="0" stop-color="#c5eaf6"/><stop offset="1" stop-color="#2c84a8"/></linearGradient>
      <radialGradient id="ball" cx=".35" cy=".3"><stop offset="0" stop-color="#f2fbfe"/><stop offset=".6" stop-color="#a9e0f2"/><stop offset="1" stop-color="#4aa6cc"/></radialGradient>
      <radialGradient id="grayBall" cx=".35" cy=".3"><stop offset="0" stop-color="#fff"/><stop offset="1" stop-color="#8b8d8f"/></radialGradient>
    </defs></svg>`;
  }

  private command(c: Command) {
    return html`<button class="cmd" aria-label=${c.label || "轴"} ?disabled=${c.disabled}>${icon(c.icon)}<span>${c.label}</span>${c.menu ? caret : nothing}</button>`;
  }

  private bigCommand(c: BigCommand) {
    return html`<button class="big">${icon(c.icon, 48)}<span class="text">${c.label}</span>${c.menu ? caret : nothing}</button>`;
  }

  private titleBar() {
    return html`<header class="titlebar">
      <div class="brand">${icon("cube")}<span class="word">creo</span><sup>•</sup></div>
      <div class="quick" role="toolbar" aria-label="快速访问">
        <button aria-label="新建">${icon("newFile")}</button>
        <button aria-label="打开">${icon("open")}</button>
        <button aria-label="保存">${icon("save")}</button>
        <button aria-label="撤消">${icon("undo")}</button>
        <button class="drop off" aria-label="撤消列表">${caret}</button>
        <button aria-label="重做">${icon("redo")}</button>
        <button class="drop off" aria-label="重做列表">${caret}</button>
        <button aria-label="重新生成">${icon("regenSmall")}</button>
        <button aria-label="窗口">${icon("windows")}</button>
        <button class="drop" aria-label="窗口列表">${caret}</button>
        <button class="hot" aria-label="关闭">${icon("closeX")}</button>
        <button class="customize" aria-label="自定义"><span class="bars">${caret}</span></button>
      </div>
      <h1 class="title">KEY_BASE (活动的) - Creo Parametric</h1>
    </header>`;
  }

  private tab(t: string) {
    return html`<button class=${classMap({ active: t === this.activeTab })} @click=${() => (this.activeTab = t)}>${t}</button>`;
  }

  private ribbon() {
    return html`
      <nav class="tabs">
        <button class="file">文件</button>
        ${MAIN_TABS.map((t) => this.tab(t))}
        <div class="extra-tabs">${EXTRA_TABS.map((t) => this.tab(t))}</div>
      </nav>
      <section class="ribbon">
        ${GROUPS.map((g) => html`<div class="group">
          <div class="group-body">
            ${g.columns.map((c) => Array.isArray(c) ? html`<div class="stack">${c.map((x) => this.command(x))}</div>` : this.bigCommand(c))}
          </div>
          <button class="group-label">${g.label}${g.menu ? caret : nothing}</button>
        </div>`)}
      </section>`;
  }

  private side() {
    return html`<aside class="side">
      <div class="side-tabs">
        <button class="active" aria-label="模型树">${icon("treeTab")}</button>
        <button aria-label="文件夹浏览器">${icon("folders")}</button>
        <button aria-label="收藏夹">${icon("favorites")}</button>
      </div>
      <div class="tree-tools">
        <button class="main" aria-label="模型">${icon("greenCube")}</button>
        <span class="grip"></span>
        <button aria-label="全部展开">${icon("expandAll")}</button>
        <button aria-label="全部折叠">${icon("collapseAll")}</button>
        <button class="pressed" aria-label="树列">${icon("columns")}</button>
        <span class="rule"></span>
        <button aria-label="新建文件夹">${icon("addFolder")}</button>
        <span class="rule"></span>
        <button aria-label="树过滤器">${icon("treeFilter")}</button>
        <button aria-label="树设置">${icon("treePrefs")}</button>
        <span class="rule"></span>
        <button class="more" aria-label="更多">»</button>
        <button aria-label="首选项">${icon("pagePrefs")}</button>
      </div>
      <div class="search">
        ${icon("funnel")}
        <div class="field">
          <input type="text" aria-label="过滤模型树" .value=${this.filter} @input=${(e: InputEvent) => (this.filter = (e.target as HTMLInputElement).value)} />
          <button aria-label="清除" @click=${() => (this.filter = "")}>
            <svg width="12" height="12" viewBox="0 0 12 12"><path d="M1 1l10 10M11 1L1 11" stroke="#a9abac" stroke-width="2"/></svg>
          </button>
        </div>
        <button class="drop" aria-label="过滤选项">${caret}</button>
        <button class="add" aria-label="添加过滤器">
          <svg width="18" height="18" viewBox="0 0 18 18"><path d="M9 0v18M0 9h18" stroke="#a0a3a4" stroke-width="5"/></svg>
        </button>
      </div>
      <ul class="tree">
        <li class="row">${icon("cube")}<span>KEY_BASE.PRT</span></li>
        ${TREE.map((n) => html`<li class=${classMap({ row: true, child: true, hidden: !!n.hidden })}>
          <button class=${classMap({ twist: true, leaf: !n.expandable })} aria-label="展开"></button>
          ${icon(n.icon)}<span>${n.label}</span>
        </li>`)}
      </ul>
      <div class="insert-line"></div>
    </aside>`;
  }

  private model() {
    return html`<svg class="model" width="520" height="660" viewBox="0 0 520 660" role="img" aria-label="KEY_BASE">
      <defs>
        <linearGradient id="body" gradientUnits="userSpaceOnUse" x1="420" y1="740" x2="960" y2="530">
          <stop offset="0" stop-color="#3d4446"/><stop offset=".12" stop-color="#484e51"/><stop offset=".3" stop-color="#4d5356"/><stop offset=".6" stop-color="#454b4e"/><stop offset=".88" stop-color="#3c4245"/><stop offset=".94" stop-color="#414346"/><stop offset="1" stop-color="#454447"/>
        </linearGradient>
        <linearGradient id="stub"><stop offset="0" stop-color="#53585b"/><stop offset=".8" stop-color="#3b4144"/><stop offset="1" stop-color="#454447"/></linearGradient>
        <linearGradient id="bore"><stop offset="0" stop-color="#434245"/><stop offset=".35" stop-color="#5c5f61"/><stop offset=".55" stop-color="#5c6366"/><stop offset="1" stop-color="#747c80"/></linearGradient>
        <linearGradient id="tooth"><stop offset="0" stop-color="#73706e"/><stop offset=".12" stop-color="#8b8784"/><stop offset=".35" stop-color="#7c7976"/><stop offset="1" stop-color="#7d7a78"/></linearGradient>
        <linearGradient id="flute" x2="1" y2=".4"><stop offset="0" stop-color="#75726f"/><stop offset=".35" stop-color="#8f8b88"/><stop offset=".6" stop-color="#7c7976"/><stop offset="1" stop-color="#83807d"/></linearGradient>
      </defs>
      <g transform="scale(0.33333 0.42092)">
        <g fill="#d5d1cf" fill-opacity=".42">
          <path d="M57 324H930L1496 1238H623z"/><path d="M510 597H1385L1165 1164H290z"/><path d="M604 41L1170 955 949 1521 382 606z"/>
        </g>
        <path d="M890 1212L920 1270C950 1306 1000 1310 1050 1307 1140 1288 1190 1230 1184 1190L1138 1112z" fill="url(#stub)"/>
        <path d="M1255 890L1260 920 1230 1090 1140 1112 1136 1190 1070 1184 1010 1210 930 1210 860 1180 665 1150 600 1130 700 1000 1100 800z" fill="#7d7a77"/>
        <path d="M995 628L1017 622 1060 628 1097 641 1099 690 1115 696 1135 711 1165 707 1180 701 1197 704 1230 745 1247 778 1240 845C1236 880 1225 908 1200 920L1166 922C1150 930 1140 950 1112 978L1130 1005 1050 1062 1010 1048 930 1085 912 1120 820 1138 790 1110 735 1108 665 1138 610 1131 580 1118 590 1085 535 1052 485 1060 445 1008 488 980 488 945 438 913 445 880 462 847 500 841z" fill="#747d83"/>
        <path d="M995 628L1017 622 1060 628 1097 641 1085 665 1086 685 1110 740 1060 740z" fill="#75787e"/>
        <path d="M1097 641L1085 665 1086 685 1101 692z" fill="#7d7674"/>
        <path d="M440 914L470 920 485 932 486 945z" fill="#86817e"/>
        <path d="M485 1060L530 1049 590 1082 580 1115 592 1134 494 1088z" fill="#7d7976"/>
        <path d="M579 1118L610 1132 665 1138 662 1170 655 1185 600 1145z" fill="#908c89"/>
        <path d="M665 1138C690 1118 700 1109 735 1109L790 1110 820 1145 912 1214 890 1220C870 1245 850 1250 825 1258L655 1185C664 1165 664 1150 665 1138z" fill="#797572"/>
        <path d="M790 1110L812 1139C850 1140 880 1130 912 1118L905 1165 893 1184 855 1165z" fill="#918d8a"/>
        <path d="M926 1085L1010 1048 1075 1187C1040 1185 1020 1190 1012 1215 1010 1240 995 1255 987 1258 970 1255 940 1222 912 1217L845 1158 893 1184C912 1160 905 1115 926 1085z" fill="#7b7875"/>
        <path d="M1010 1048L1050 1062 1125 1087 1140 1120 1138 1195 1075 1187z" fill="url(#flute)"/>
        <path d="M1050 1062C1095 1050 1120 1025 1130 1005L1112 978C1140 950 1150 930 1166 922L1153 1112 1138 1116 1125 1087C1090 1082 1070 1072 1050 1062z" fill="#7a7775"/>
        <path d="M1166 922L1200 920C1225 908 1236 880 1240 845L1253 880 1260 920 1240 1030 1230 1092 1190 1106 1153 1113z" fill="url(#tooth)"/>
        <path d="M1190 780L1220 767 1247 778 1240 845 1192 835z" fill="#7b7876"/>
        <path d="M226 370L245 440 585 985C630 1040 710 1057 790 1056 970 1048 1112 930 1107 825 1107 790 1092 770 1085 755L755 235z" fill="url(#body)"/>
        <path d="M275 465H611L743 687H415z" fill="#4e525a"/>
        <path d="M245 440L275 465 415 687H408z" fill="#42494b"/>
        <path d="M415 687H743C670 725 620 727 560 727 490 722 450 710 415 687z" fill="#727b80"/>
        <ellipse cx="511" cy="577" rx="77" ry="36" fill="url(#bore)" transform="rotate(6 511 577)"/>
        <path d="M386 192H714C750 220 768 260 768 300 760 370 690 430 611 465H275C240 435 225 400 226 370 228 290 305 230 386 192z" fill="#757e84"/>
        <g fill="none" stroke="#7b4f58">
          <g stroke-width="2.500">
            <path d="M57 324H930L1496 1238H623z"/><path d="M510 597H1385L1165 1164H290z"/><path d="M604 41L1170 955 949 1521 382 606z"/>
          </g>
          <path d="M478 302L1073 1258M629 271L510 597" stroke-width="2" stroke-dasharray="8 2"/>
        </g>
        <g fill="none" stroke-width="3">
          <path d="M776 780H876M837 880H978" stroke="#ff2f2f"/>
          <path d="M776 780L742 728M758 766L768 795 772 770" stroke="#2fff2f"/>
          <path d="M776 780L750 848M837 880L803 972" stroke="#30ffff"/>
        </g>
        <path d="M922 873V887L962 880z" fill="#ff2f2f"/>
        <path d="M795 812L824 842 808 849z" fill="#2fff2f"/>
        <path d="M808 929L826 935 803 970z" fill="#30ffff"/>
        <ellipse cx="742" cy="728" rx="9" ry="7" fill="#2fff2f"/>
        <ellipse cx="876" cy="780" rx="7" ry="6" fill="#ff2f2f"/>
        <ellipse cx="750" cy="848" rx="8" ry="6" fill="#30ffff"/>
      </g>
      <text x="283" y="386" fill="#7b4f58">DEFAULT_CSYS</text>
      <text x="329" y="367" fill="#ff2f2f">X</text>
      <text x="253" y="426" fill="#30ffff">Z</text>
    </svg>`;
  }

  private canvas() {
    return html`<main class="canvas">
      <div class="view-tools" role="toolbar" aria-label="图形">
        ${VIEW_TOOLS.map(([name, label]) => html`<button class=${classMap({ pressed: PRESSED_TOOLS.has(name) })} ?disabled=${OFF_TOOLS.has(name)} aria-label=${label}>${icon(name)}</button>`)}
      </div>
      ${this.model()}
    </main>`;
  }

  render() {
    return html`
      ${this.defs()}
      ${this.titleBar()}
      ${this.ribbon()}
      <div class="workspace">${this.side()}${this.canvas()}</div>
      <div class="tooltip" role="tooltip">
        <p class="head">${icon("closeX")}<strong>关闭</strong><span class="keys">(Ctrl+W)</span></p>
        <p>关闭窗口并将对象留在会话中。</p>
      </div>
      <svg class="markup" width="600" height="520" viewBox="0 0 600 520" aria-hidden="true">
        <rect x="437" y="7" width="90" height="46" rx="1" fill="none" stroke="#ed1c24" stroke-width="7" stroke-linejoin="round"/>
        <path d="M463 92L493 495" stroke="#ed1c24" stroke-width="8" stroke-linecap="round"/>
        <path d="M461 69L477 100Q463 93 449 102z" fill="#ed1c24"/>
      </svg>
      <p class="callout">关闭窗口</p>
    `;
  }
}
